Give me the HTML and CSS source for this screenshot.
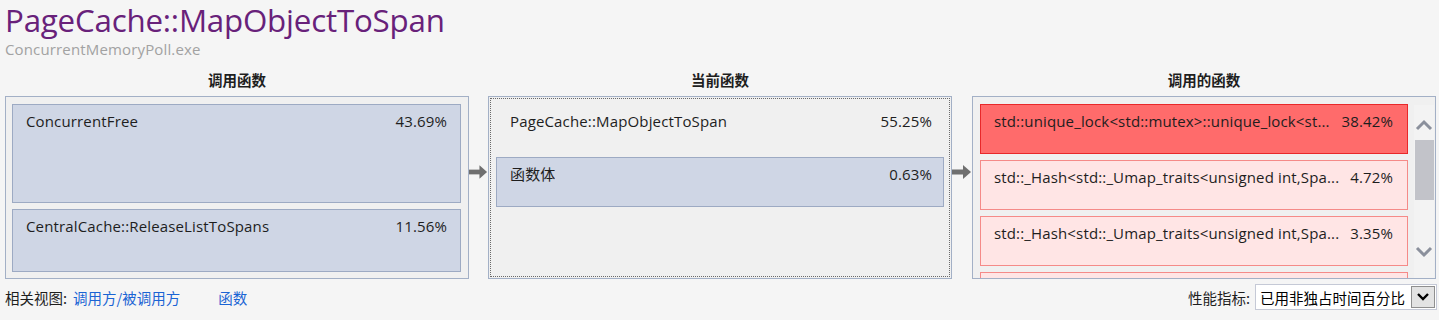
FILE: index.html
```html
<!DOCTYPE html>
<html lang="zh-CN">
<head>
<meta charset="utf-8">
<title>PageCache::MapObjectToSpan</title>
<link rel="stylesheet" href="styles.css">
</head>
<body>
<header class="head">
  <h1 class="title">PageCache::MapObjectToSpan</h1>
  <div class="sub">ConcurrentMemoryPoll.exe</div>
</header>
<main class="grid">
  <div class="colhead">调用函数</div>
  <div></div>
  <div class="colhead">当前函数</div>
  <div></div>
  <div class="colhead">调用的函数</div>

  <section class="panel">
    <div class="item blue tall"><span class="name">ConcurrentFree</span><span class="pct">43.69%</span></div>
    <div class="item blue short"><span class="name">CentralCache::ReleaseListToSpans</span><span class="pct">11.56%</span></div>
  </section>

  <div class="arrow"><svg width="20" height="16" viewBox="0 0 20 16"><rect x="0" y="5.5" width="12" height="5" fill="#6f6f6f"/><polygon points="11,1 19,8 11,15" fill="#6f6f6f"/></svg></div>

  <section class="panel mid">
    <div class="item plain"><span class="name">PageCache::MapObjectToSpan</span><span class="pct">55.25%</span></div>
    <div class="item blue row"><span class="name">函数体</span><span class="pct">0.63%</span></div>
  </section>

  <div class="arrow"><svg width="20" height="16" viewBox="0 0 20 16"><rect x="0" y="5.5" width="12" height="5" fill="#6f6f6f"/><polygon points="11,1 19,8 11,15" fill="#6f6f6f"/></svg></div>

  <section class="panel right">
    <div class="list">
      <div class="item hot"><span class="name">std::unique_lock&lt;std::mutex&gt;::unique_lock&lt;st...</span><span class="pct">38.42%</span></div>
      <div class="item warm"><span class="name">std::_Hash&lt;std::_Umap_traits&lt;unsigned int,Spa...</span><span class="pct">4.72%</span></div>
      <div class="item warm"><span class="name">std::_Hash&lt;std::_Umap_traits&lt;unsigned int,Spa...</span><span class="pct">3.35%</span></div>
      <div class="item warm"><span class="name">&nbsp;</span><span class="pct"></span></div>
    </div>
    <div class="scrollbar">
      <svg class="sb-up" width="20" height="14" viewBox="0 0 20 14"><polyline points="3,11 10,4 17,11" fill="none" stroke="#8b909c" stroke-width="3"/></svg>
      <div class="thumb"></div>
      <svg class="sb-down" width="20" height="14" viewBox="0 0 20 14"><polyline points="3,3 10,10 17,3" fill="none" stroke="#8b909c" stroke-width="3"/></svg>
    </div>
  </section>
</main>
<footer class="foot">
  <div class="related">
    <span class="label">相关视图:</span>
    <a class="link" href="#">调用方/被调用方</a>
    <a class="link second" href="#">函数</a>
  </div>
  <div class="metric">
    <span class="label">性能指标:</span>
    <div class="select">
      <span class="sel-text">已用非独占时间百分比</span>
      <span class="sel-btn"><svg width="14" height="10" viewBox="0 0 14 10"><polyline points="2,2 7,7 12,2" fill="none" stroke="#000" stroke-width="2.4"/></svg></span>
    </div>
  </div>
</footer>
</body>
</html>
```

FILE: styles.css
```css
* { box-sizing: border-box; }
html, body { margin: 0; padding: 0; }
body {
  background: #f5f5f5;
  font-family: "Open Sans", "Noto Sans CJK SC", sans-serif;
  font-size: 15px;
  color: #1e1e1e;
  width: 1439px;
  height: 320px;
  overflow: hidden;
}
.head { padding: 0 0 0 5px; }
.title {
  margin: 0;
  font-family: "Open Sans", "Noto Sans CJK SC", sans-serif;
  font-weight: 400;
  font-size: 31.3px;
  line-height: 40px;
  color: #68217a;
  letter-spacing: -0.2px;
}
.sub {
  font-size: 15px;
  line-height: 18px;
  color: #a2a2a2;
  letter-spacing: 0.15px;
}
.grid {
  display: grid;
  grid-template-columns: 464px 19px 464px 20px 464px;
  grid-template-rows: 38px 183px;
  margin-left: 5px;
}
.colhead {
  text-align: center;
  font-family: "Noto Sans CJK SC", sans-serif;
  font-weight: 700;
  font-size: 14.5px;
  line-height: 20px;
  color: #1e1e1e;
  padding-top: 12px;
}
.panel {
  border: 1px solid #a3b0c6;
  background: #f0f0f0;
  padding: 7px 7px 6px 6px;
  display: flex;
  flex-direction: column;
  gap: 6px;
  overflow: hidden;
}
.item {
  display: flex;
  justify-content: space-between;
  align-items: flex-start;
  padding: 6px 13px 0 13px;
  line-height: 21px;
  white-space: nowrap;
  letter-spacing: 0.15px;
  flex: none;
}
.item .name { overflow: hidden; }
.item .pct { margin-left: 8px; }
.blue { background: #cfd6e5; border: 1px solid #9daac3; }
.tall { height: 99px; }
.short { height: 63px; }
.arrow {
  padding-top: 68px;
  display: flex;
  justify-content: center;
}
.arrow svg { display: block; }
.mid {
  position: relative;
  padding: 7px 7px 6px 7px;
  gap: 3px;
}
.mid::after {
  content: "";
  position: absolute;
  inset: 1px;
  border: 1px dotted #6a6a6a;
  pointer-events: none;
}
.plain { height: 50px; border: 1px solid transparent; padding-left: 13px; padding-right: 11px; }
.row { height: 50px; padding-left: 13px; padding-right: 11px; }
.right {
  flex-direction: row;
  padding: 7px 1px 0 7px;
  gap: 6px;
}
.list {
  width: 428px;
  display: flex;
  flex-direction: column;
  gap: 6px;
  flex: none;
}
.hot { background: #ff6b6b; border: 1px solid #e8282a; height: 50px; padding-right: 14px; }
.warm { background: #ffe5e5; border: 1px solid #f58a88; height: 50px; padding-right: 14px; }
.scrollbar {
  width: 20px;
  height: 174px;
  margin-top: 1px;
  background: #f3f3f3;
  display: flex;
  flex-direction: column;
  align-items: center;
  flex: none;
}
.sb-up { margin-top: 13px; display: block; }
.thumb { width: 19px; height: 60px; background: #c2c3c9; margin-top: 8px; }
.sb-down { margin-top: 45px; display: block; }
.foot {
  display: flex;
  justify-content: space-between;
  align-items: center;
  padding: 0 2px 0 5px;
  margin-top: 4px;
  height: 28px;
  font-family: "Noto Sans CJK SC", sans-serif;
  font-size: 14.5px;
}
.related { display: flex; align-items: center; }
.label { color: #1e1e1e; }
.link { color: #1a64d4; text-decoration: none; margin-left: 6px; }
.second { margin-left: 38px; }
.metric { display: flex; align-items: center; }
.select {
  margin-left: 5px;
  width: 182px;
  height: 26px;
  border: 1px solid #c5c9d6;
  background: #fff;
  display: flex;
  align-items: center;
  justify-content: space-between;
  padding: 1px 0 1px 4px;
  font-size: 14.5px;
}
.sel-text { color: #000; }
.sel-btn {
  width: 24px;
  height: 22px;
  background: #e3e3e3;
  border: 1px solid #8f8f8f;
  display: flex;
  align-items: center;
  justify-content: center;
  margin-right: 1px;
}
.sel-btn svg { display: block; }
```
